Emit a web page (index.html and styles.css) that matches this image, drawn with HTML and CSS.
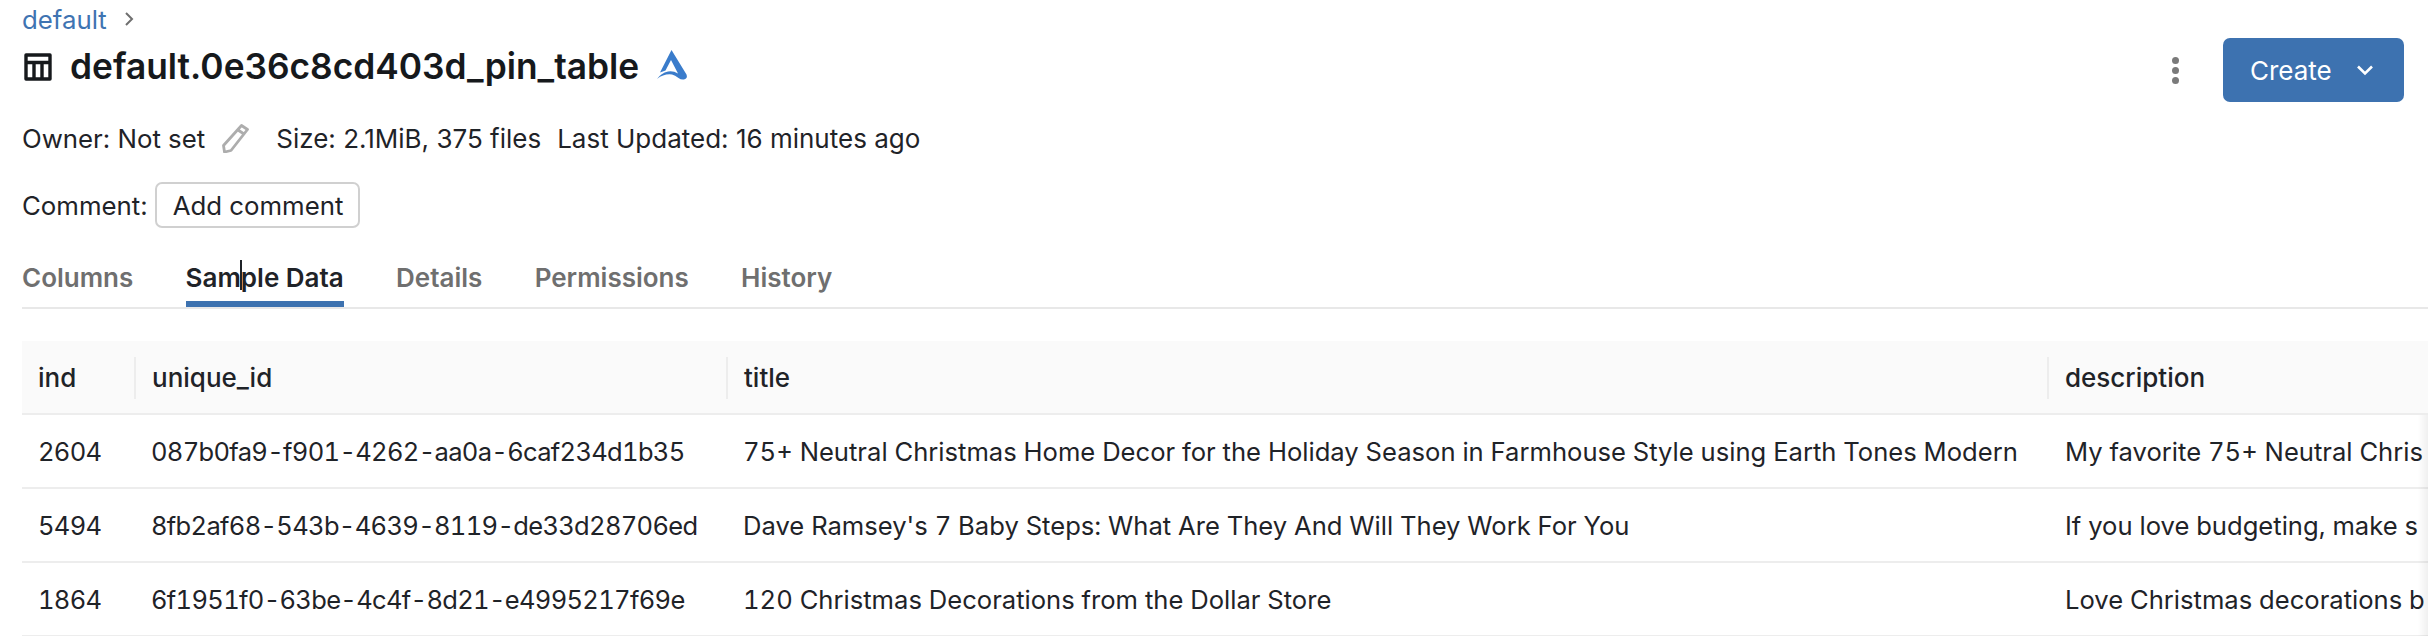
FILE: index.html
```html
<!DOCTYPE html>
<html lang="en">
<head>
    <meta charset="UTF-8">
    <meta name="viewport" content="width=device-width, initial-scale=1.0">
    <title>default.0e36c8cd403d_pin_table</title>
    <link rel="stylesheet" href="styles.css">
</head>
<body>
    <header class="page-header">
        <div class="header-main">
            <nav class="breadcrumb">
                <a href="#">default</a>
                <svg class="crumb-chevron" width="12" height="16" viewBox="0 0 12 16"><path d="M3 2l6 6-6 6" fill="none" stroke="#6f6f6f" stroke-width="2"/></svg>
            </nav>
            <div class="title-row">
                <svg class="table-icon" width="28" height="28" viewBox="0 0 28 28"><path d="M2 2h24v24H2zM2 9.500h24M10 9.500V26M18 9.500V26" fill="none" stroke="#16191c" stroke-width="3.400" stroke-linejoin="round"/></svg>
                <h1>default.0e36c8cd403d_pin_table</h1>
                <svg class="brand-icon" width="32" height="30" viewBox="0 0 32 30"><path d="M15.500 0L30.500 24.500Q32 28.500 28 29.500Q25 30 22.500 28Q19 25 16 24.500Q8 23.500 1 29Q5 23 12 21.500Q17 20.500 22 23.500L15 10L9.500 20.500L4 22.500Z" fill="#3a7ccb"/></svg>
            </div>
        </div>
        <div class="header-actions">
            <button class="kebab" type="button" aria-label="More"><i></i><i></i><i></i></button>
            <button class="create-btn" type="button">Create
                <svg width="18" height="12" viewBox="0 0 18 12"><path d="M2 2.500l7 7 7-7" fill="none" stroke="#fff" stroke-width="2.600"/></svg>
            </button>
        </div>
    </header>

    <div class="meta-row">
        <span>Owner: Not set</span>
        <svg class="pencil" width="30" height="30" viewBox="0 0 30 30"><path d="M21.500 2.500l6 4L11 27.500l-6.500 1.500-1-6.500zM18 7l6 4" fill="none" stroke="#adadad" stroke-width="2.800" stroke-linejoin="round"/></svg>
        <span class="meta-size">Size: 2.1MiB, 375 files</span>
        <span class="meta-updated">Last Updated: 16 minutes ago</span>
    </div>

    <div class="comment-row">
        <span>Comment:</span>
        <button class="comment-btn" type="button">Add comment</button>
    </div>

    <div class="tabs">
        <a href="#" class="tab">Columns</a>
        <a href="#" class="tab active">Sample Data<span class="ibeam"></span></a>
        <a href="#" class="tab">Details</a>
        <a href="#" class="tab">Permissions</a>
        <a href="#" class="tab">History</a>
    </div>

    <div class="table-wrap">
        <table class="data-table">
            <colgroup>
                <col class="col-ind">
                <col class="col-id">
                <col class="col-title">
                <col class="col-desc">
            </colgroup>
            <thead>
                <tr>
                    <th><span>ind</span></th>
                    <th><span>unique_id</span></th>
                    <th><span>title</span></th>
                    <th><span>description</span></th>
                </tr>
            </thead>
            <tbody>
                <tr>
                    <td class="cell-num">2604</td>
                    <td class="cell-num">087b0fa9-f901-4262-aa0a-6caf234d1b35</td>
                    <td>75+ Neutral Christmas Home Decor for the Holiday Season in Farmhouse Style using Earth Tones Modern</td>
                    <td>My favorite 75+ Neutral Chris</td>
                </tr>
                <tr>
                    <td class="cell-num">5494</td>
                    <td class="cell-num">8fb2af68-543b-4639-8119-de33d28706ed</td>
                    <td>Dave Ramsey's 7 Baby Steps: What Are They And Will They Work For You</td>
                    <td>If you love budgeting, make s</td>
                </tr>
                <tr>
                    <td class="cell-num">1864</td>
                    <td class="cell-num">6f1951f0-63be-4c4f-8d21-e4995217f69e</td>
                    <td>120 Christmas Decorations from the Dollar Store</td>
                    <td>Love Christmas decorations b</td>
                </tr>
            </tbody>
        </table>
        <div class="scroll-shade"></div>
    </div>
</body>
</html>
```

FILE: styles.css
```css
/* Global */
html, body {
    height: 636px;
    overflow: hidden;
}

body {
    margin: 0;
    padding: 0 0 0 22px;
    background-color: #fff;
    color: #1f2328;
    font-family: 'Inter', sans-serif;
    font-size: 25.8px;
}

/* Header */
.page-header {
    display: flex;
    justify-content: space-between;
    height: 110px;
}

.breadcrumb {
    display: flex;
    align-items: center;
    gap: 16px;
    height: 38px;
}

.breadcrumb a {
    color: #3f74b2;
    text-decoration: none;
}

.title-row {
    display: flex;
    align-items: center;
    gap: 18px;
    height: 58px;
}

.table-icon {
    margin-left: 2px;
}

.title-row h1 {
    margin: 0;
    color: #16191c;
    font-size: 35.3px;
    font-weight: 600;
    line-height: 58px;
}

.brand-icon {
    margin-top: -4px;
    margin-left: -1px;
}

.header-actions {
    display: flex;
    align-items: flex-start;
    gap: 44px;
    padding: 38px 24px 0 0;
}

.kebab {
    display: flex;
    flex-direction: column;
    gap: 3px;
    margin-top: 19px;
    padding: 0;
    border: none;
    background: none;
}

.kebab i {
    width: 7px;
    height: 7px;
    border-radius: 50%;
    background-color: #7a7a7a;
}

.create-btn {
    display: flex;
    align-items: center;
    gap: 24px;
    width: 181px;
    height: 64px;
    padding: 0 0 0 27px;
    border: none;
    border-radius: 7px;
    background-color: #3d72b0;
    color: white;
    font-family: inherit;
    font-size: 26px;
}

/* Meta rows */
.meta-row {
    display: flex;
    align-items: center;
    height: 56px;
}

.pencil {
    margin-left: 15px;
}

.meta-size {
    margin-left: 26px;
    font-size: 26px;
}

.meta-updated {
    margin-left: 16px;
    font-size: 26px;
}

.comment-row {
    display: flex;
    align-items: center;
    gap: 7px;
    height: 46px;
    margin-top: 16px;
}

.comment-btn {
    height: 46px;
    padding: 0 15px 0 16px;
    border: 2px solid #d0d0d0;
    border-radius: 7px;
    background: white;
    color: #1f2328;
    font-family: inherit;
    font-size: 25.8px;
}

/* Tabs */
.tabs {
    display: flex;
    gap: 52.3px;
    height: 81px;
    box-sizing: border-box;
    border-bottom: 2px solid #e8e8e8;
    padding-top: 30px;
    font-size: 26px;
}

.tab {
    position: relative;
    height: 49px;
    box-sizing: border-box;
    color: #6f6f6f;
    font-weight: 600;
    line-height: 40px;
    text-decoration: none;
}

.tab.active {
    border-bottom: 6px solid #3d72b0;
    color: #1f2328;
}

.ibeam {
    position: absolute;
    left: 54px;
    top: 2px;
    width: 2px;
    height: 30px;
    background-color: #1f2328;
}

/* Table */
.table-wrap {
    position: relative;
    margin-top: 32px;
    overflow: hidden;
}

.data-table {
    width: 2406px;
    table-layout: fixed;
    border-collapse: collapse;
}

.col-ind { width: 112px; }
.col-id { width: 592px; }
.col-title { width: 1321px; }
.col-desc { width: 381px; }

.data-table th {
    height: 72px;
    padding: 0;
    border-bottom: 2px solid #ededed;
    background-color: #fafafa;
    font-size: 26px;
    font-weight: 500;
    text-align: left;
}

.data-table th span {
    display: block;
    height: 42px;
    margin-top: 2px;
    padding-left: 16px;
    line-height: 42px;
    border-left: 2px solid #ededed;
}

.data-table th:first-child span {
    border-left: none;
}

.data-table td {
    height: 72px;
    padding: 0 0 0 17px;
    border-bottom: 2px solid #ededed;
    font-size: 25.6px;
    font-variant-numeric: tabular-nums;
    white-space: nowrap;
    overflow: hidden;
}

.data-table td:first-child {
    padding-left: 16px;
}

.data-table td:last-child {
    padding-left: 18px;
}

.data-table td.cell-num {
    font-size: 25.5px;
    letter-spacing: -0.68px;
}

.scroll-shade {
    position: absolute;
    top: 74px;
    right: 0;
    bottom: 0;
    width: 10px;
    background: linear-gradient(to right, rgba(0, 0, 0, 0), rgba(0, 0, 0, 0.06));
}
```
